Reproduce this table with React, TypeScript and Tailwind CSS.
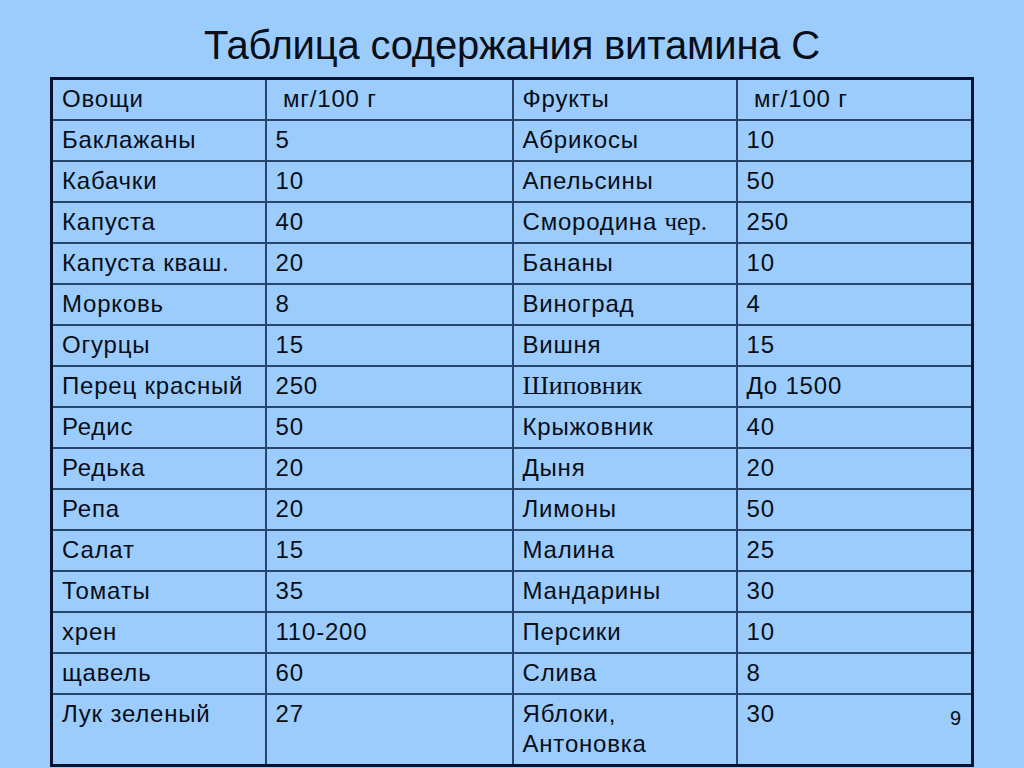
const rows: [React.ReactNode, string, React.ReactNode, string][] = [
  ["Баклажаны", "5", "Абрикосы", "10"],
  ["Кабачки", "10", "Апельсины", "50"],
  [
    "Капуста",
    "40",
    <>
      Смородина{" "}
      <span className="font-['Liberation_Serif',serif] text-[25px] tracking-normal">чер.</span>
    </>,
    "250",
  ],
  ["Капуста кваш.", "20", "Бананы", "10"],
  ["Морковь", "8", "Виноград", "4"],
  ["Огурцы", "15", "Вишня", "15"],
  [
    "Перец красный",
    "250",
    <span className="font-['Liberation_Serif',serif] text-[26px] tracking-normal">Шиповник</span>,
    "До 1500",
  ],
  ["Редис", "50", "Крыжовник", "40"],
  ["Редька", "20", "Дыня", "20"],
  ["Репа", "20", "Лимоны", "50"],
  ["Салат", "15", "Малина", "25"],
  ["Томаты", "35", "Мандарины", "30"],
  ["хрен", "110-200", "Персики", "10"],
  ["щавель", "60", "Слива", "8"],
];

const cell = "border-2 border-[#26466c] align-top px-[9px] pt-[4px] h-[41px]";

export default function App() {
  return (
    <div className="relative w-[1024px] h-[768px] overflow-hidden bg-[#9cccfc] font-['Liberation_Sans',Arial,sans-serif] text-[#080e18]">
      <h1 className="pt-[21px] text-center text-[40px] leading-[48px] font-normal tracking-[-0.2px]">
        Таблица содержания витамина С
      </h1>
      <table className="ml-[50px] mt-[8px] w-[921px] table-fixed border-collapse border-[3px] border-[#0a1230] text-[24px] leading-[30px] tracking-[0.8px]">
        <colgroup>
          <col className="w-[214px]" />
          <col className="w-[247px]" />
          <col className="w-[224px]" />
          <col className="w-[236px]" />
        </colgroup>
        <tbody>
          <tr>
            <td className={cell}>Овощи</td>
            <td className={cell}>&nbsp;мг/100 г</td>
            <td className={cell}>Фрукты</td>
            <td className={cell}>&nbsp;мг/100 г</td>
          </tr>
          {rows.map((r, i) => (
            <tr key={i}>
              <td className={cell}>{r[0]}</td>
              <td className={cell}>{r[1]}</td>
              <td className={cell}>{r[2]}</td>
              <td className={cell}>{r[3]}</td>
            </tr>
          ))}
          <tr>
            <td className={cell + " !h-[72px]"}>Лук зеленый</td>
            <td className={cell}>27</td>
            <td className={cell}>
              Яблоки,
              <br />
              Антоновка
            </td>
            <td className={cell}>30</td>
          </tr>
        </tbody>
      </table>
      <div className="absolute left-[950px] top-[706px] text-[20px] leading-[24px]">9</div>
    </div>
  );
}
